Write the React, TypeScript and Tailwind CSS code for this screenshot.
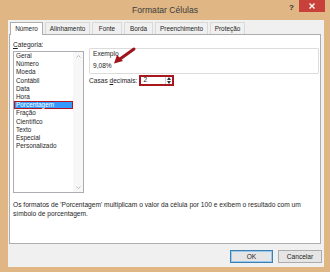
import React from 'react';

const tabs: [string, string][] = [
  ['Número', 'w-[33px]'],
  ['Alinhamento', 'w-[45px]'],
  ['Fonte', 'w-[30px]'],
  ['Borda', 'w-[29px]'],
  ['Preenchimento', 'w-[53px]'],
  ['Proteção', 'w-[35px]'],
];

const categories = [
  'Geral',
  'Número',
  'Moeda',
  'Contábil',
  'Data',
  'Hora',
  'Porcentagem',
  'Fração',
  'Científico',
  'Texto',
  'Especial',
  'Personalizado',
];

export default function App() {
  return (
    <div
      className="w-[330px] h-[272px] bg-[#dfb684] flex flex-col text-[#1e1e1e] overflow-hidden"
      style={{ fontFamily: '"Liberation Sans", Arial, sans-serif' }}
    >
      {/* title bar */}
      <div className="relative h-[20px] flex items-center justify-center shrink-0">
        <span className="text-[8.6px] text-[#3c3c3c]">Formatar Células</span>
        <span className="absolute right-[36px] top-[2px] text-[8px] font-bold text-[#333]">?</span>
        <div className="absolute right-[5px] top-0 w-[26px] h-[12px] bg-[#c7403a] flex items-center justify-center">
          <svg width="6" height="6" viewBox="0 0 6 6">
            <path d="M0.5 0.5 L5.5 5.5 M5.5 0.5 L0.5 5.5" stroke="#fff" strokeWidth="1.3" />
          </svg>
        </div>
      </div>

      {/* dialog body */}
      <div className="flex-1 ml-[8px] mr-[6px] mb-[5px] bg-[#f0f0f0] flex flex-col pl-[1px] pr-[3px] pt-[2px]">
        {/* tabs */}
        <div className="flex items-end h-[12px] pl-[1px] gap-[2px]">
          {tabs.map(([t, w], i) => (
            <div
              key={t}
              className={
                i === 0
                  ? `${w} h-[13px] text-center bg-white border border-[#adadad] border-b-0 text-[6.4px] leading-[11px] relative top-[1px] z-10`
                  : `${w} h-[12px] text-center bg-[#f0f0f0] border border-[#d9d9d9] border-b-0 text-[6.4px] leading-[11px]`
              }
            >
              {t}
            </div>
          ))}
        </div>

        {/* tab panel */}
        <div className="h-[210px] bg-white border border-[#adadad] flex flex-col pl-[3px] pr-[1px] pt-[5px]">
          <div className="flex">
            {/* category list */}
            <div className="w-[71px] flex flex-col">
              <div className="text-[6.6px] leading-[9px] h-[11px]">
                <span className="underline">C</span>ategoria:
              </div>
              <div className="relative h-[142px] border border-[#abadb3] flex">
                <div className="flex-1 flex flex-col pl-[1px]">
                  {categories.map((c) =>
                    c === 'Porcentagem' ? (
                      <div
                        key={c}
                        className="h-[8.2px] text-[6.4px] leading-[5px] bg-[#3399ff] text-white pl-[1px] border-[1.5px] border-[#b3131d] -ml-[1px]"
                      >
                        {c}
                      </div>
                    ) : (
                      <div key={c} className="h-[8.2px] text-[6.4px] leading-[8px] pl-[1px]">
                        {c}
                      </div>
                    ),
                  )}
                </div>
                <div className="w-[10px] bg-[#f7f7f7] flex flex-col justify-between items-center py-[3px]">
                  <svg width="5" height="3" viewBox="0 0 5 3">
                    <path d="M0.5 2.5 L2.5 0.5 L4.5 2.5" stroke="#b5b5b5" fill="none" strokeWidth="0.9" />
                  </svg>
                  <svg width="5" height="3" viewBox="0 0 5 3">
                    <path d="M0.5 0.5 L2.5 2.5 L4.5 0.5" stroke="#b5b5b5" fill="none" strokeWidth="0.9" />
                  </svg>
                </div>
              </div>
            </div>

            {/* right side */}
            <div className="flex-1 ml-[5px] flex flex-col pt-[8px]">
              <div className="relative h-[26px] border border-[#dcdcdc] rounded-[1px] pl-[3px] pt-[1px]">
                <div className="text-[6.6px] leading-[8px]">Exemplo</div>
                <div className="text-[6.6px] leading-[8px] mt-[4px]">9,08%</div>
                <svg className="absolute left-[22px] top-[-2px]" width="24" height="18" viewBox="0 0 24 18">
                  <path d="M22 2 L8 12" stroke="#a0141c" strokeWidth="3" strokeLinecap="round" />
                  <path d="M2 16.5 L5 8 L11 14 Z" fill="#a0141c" />
                </svg>
              </div>
              <div className="flex items-center h-[12px]">
                <span className="text-[6.6px] leading-[9px]">
                  Casas <span className="underline">d</span>ecimais:
                </span>
                <div className="ml-[2px] w-[35px] h-[11px] border-2 border-[#a8161e] bg-white flex items-center">
                  <span className="text-[6.6px] leading-[8px] pl-[2px] flex-1">2</span>
                  <div className="w-[7px] h-full border-l border-[#d0d0d0] flex flex-col items-center justify-center gap-[1px]">
                    <svg width="4" height="3" viewBox="0 0 4 3">
                      <path d="M0 3 L2 0 L4 3 Z" fill="#333" />
                    </svg>
                    <svg width="4" height="3" viewBox="0 0 4 3">
                      <path d="M0 0 L2 3 L4 0 Z" fill="#333" />
                    </svg>
                  </div>
                </div>
              </div>
            </div>
          </div>

          <div className="mt-[8px] text-[6.65px] leading-[8.5px]">
            Os formatos de 'Porcentagem' multiplicam o valor da célula por 100 e exibem o resultado com um
            <br />
            símbolo de porcentagem.
          </div>
        </div>

        {/* buttons */}
        <div className="flex justify-end gap-[5px] mt-[6px] -mr-[1px]">
          <button className="w-[43px] h-[13px] border border-[#3c7fb1] bg-[#e5e5e5] text-[6.6px] leading-[11px] outline outline-1 outline-[#9cc8ec] -outline-offset-2">
            OK
          </button>
          <button className="w-[44px] h-[13px] border border-[#acacac] bg-[#e5e5e5] text-[6.6px] leading-[11px]">
            Cancelar
          </button>
        </div>
      </div>
    </div>
  );
}
